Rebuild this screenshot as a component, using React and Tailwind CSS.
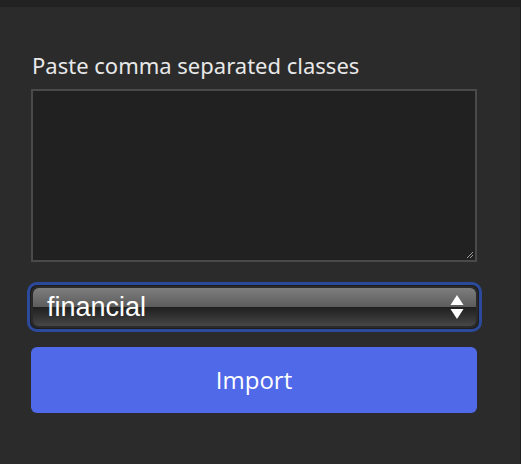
import React from "react";

function SelectArrows() {
  return (
    <svg width="14" height="26" viewBox="0 0 14 26" className="shrink-0">
      <path d="M7 1 L13.5 11 H0.5 Z" fill="#ffffff" />
      <path d="M7 25 L13.5 15 H0.5 Z" fill="#ffffff" />
    </svg>
  );
}

export default function App() {
  return (
    <div className="w-[521px] h-[464px] bg-[#2b2b2b] flex flex-col border-r border-[#1f1f1f]">
      <div className="h-[7px] bg-[#222222] shrink-0" />
      <div className="flex flex-col px-[31px] pt-[43px]">
        <label
          className="text-[22px] leading-[30px] text-[#e8e8e8] pl-[1px]"
          style={{ fontFamily: '"Noto Sans", sans-serif' }}
        >
          Paste comma separated classes
        </label>
        <div className="relative mt-[9px] w-[446px] h-[173px] border-2 border-[#4a4a4a] bg-[#212121]">
          <svg
            width="8"
            height="8"
            viewBox="0 0 8 8"
            className="absolute right-[1px] bottom-[1px]"
          >
            <path d="M1 7 L7 1 M4 7 L7 4" stroke="#9a9a9a" strokeWidth="1" />
          </svg>
        </div>
        <div className="mt-[20px] -mx-[4px] w-[455px] h-[50px] rounded-[10px] border-[3px] border-[#2c4a9c] p-[1px] bg-[#1d1d1d]">
          <div className="h-full rounded-[7px] bg-[#2a2a2a] p-[2px]">
            <div className="relative h-full rounded-[6px] overflow-hidden flex items-center pl-[14px] pr-[12px]">
              <div className="absolute inset-x-0 top-0 h-1/2 bg-gradient-to-b from-[#7e7e7e] to-[#5c5c5c]" />
              <div className="absolute inset-x-0 bottom-0 h-1/2 bg-gradient-to-b from-[#1f1f1f] to-[#474747]" />
              <span
                className="relative flex-1 text-[27px] leading-none text-white"
                style={{ fontFamily: '"Liberation Sans", Arial, sans-serif' }}
              >
                financial
              </span>
              <span className="relative">
                <SelectArrows />
              </span>
            </div>
          </div>
        </div>
        <button
          className="mt-[15px] w-[446px] h-[66px] rounded-[6px] bg-[#4f69e8] text-white text-[24px]"
          style={{ fontFamily: '"Open Sans", sans-serif' }}
        >
          Import
        </button>
      </div>
    </div>
  );
}
